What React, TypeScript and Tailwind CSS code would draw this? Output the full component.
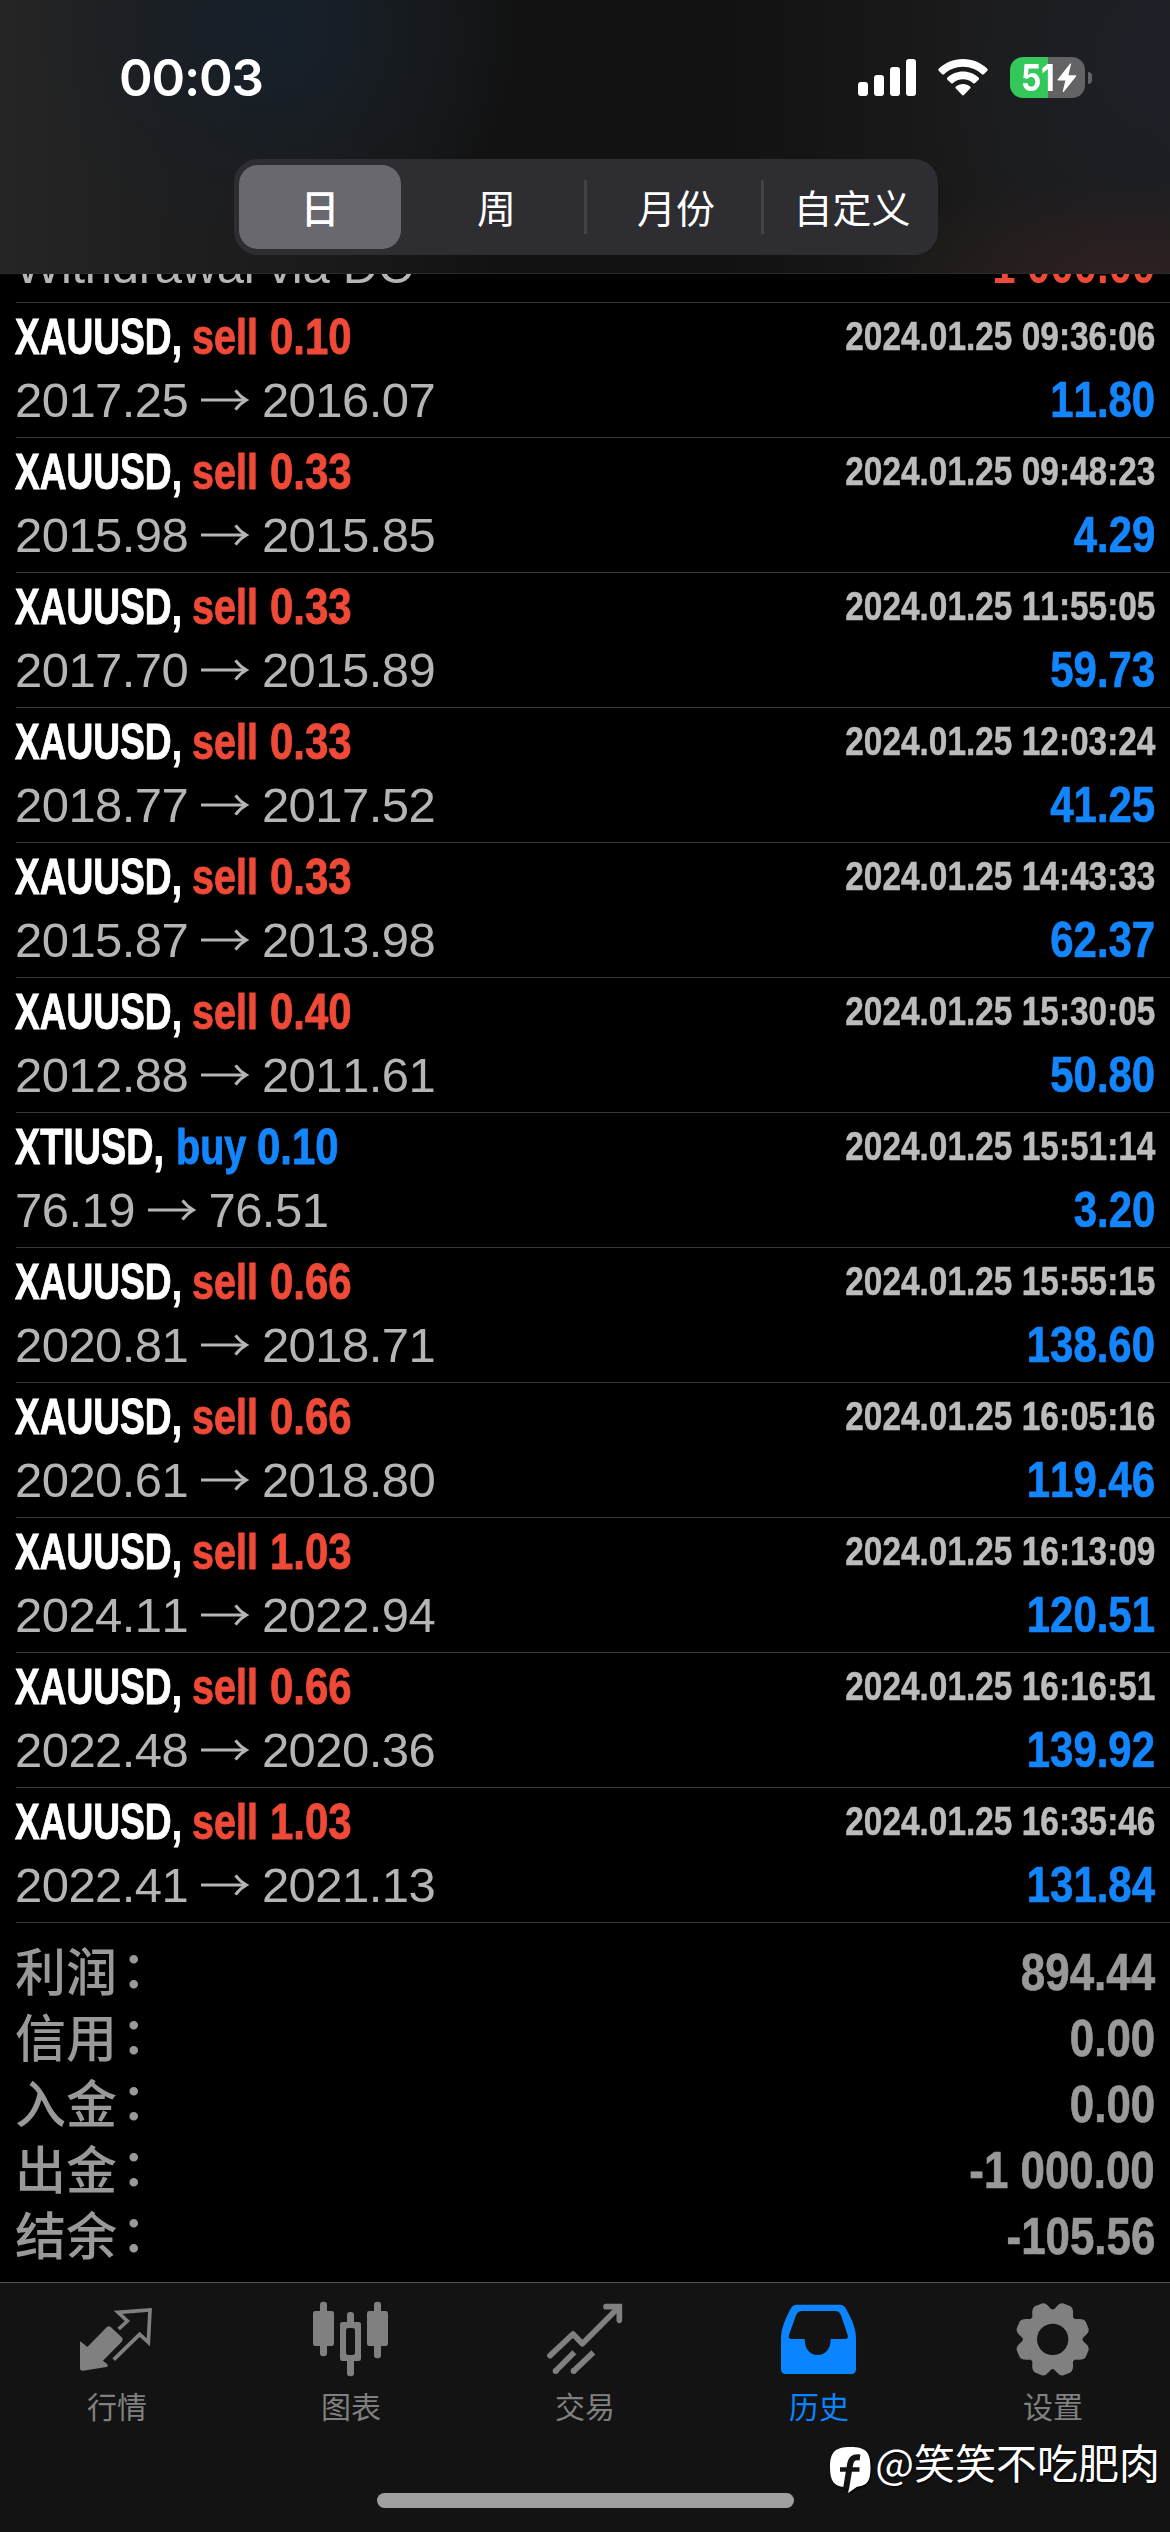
import type { ReactNode } from "react";

type Trade = {
  symbol: "XAUUSD" | "XTIUSD";
  side: "sell" | "buy";
  volume: string;
  open: string;
  close: string;
  time: string;
  profit: string;
};

const sell = (volume: string, open: string, close: string, time: string, profit: string): Trade => ({
  symbol: "XAUUSD", side: "sell", volume, open, close, time, profit,
});

const trades: Trade[] = [
  sell("0.10", "2017.25", "2016.07", "09:36:06", "11.80"),
  sell("0.33", "2015.98", "2015.85", "09:48:23", "4.29"),
  sell("0.33", "2017.70", "2015.89", "11:55:05", "59.73"),
  sell("0.33", "2018.77", "2017.52", "12:03:24", "41.25"),
  sell("0.33", "2015.87", "2013.98", "14:43:33", "62.37"),
  sell("0.40", "2012.88", "2011.61", "15:30:05", "50.80"),
  { symbol: "XTIUSD", side: "buy", volume: "0.10", open: "76.19", close: "76.51", time: "15:51:14", profit: "3.20" },
  sell("0.66", "2020.81", "2018.71", "15:55:15", "138.60"),
  sell("0.66", "2020.61", "2018.80", "16:05:16", "119.46"),
  sell("1.03", "2024.11", "2022.94", "16:13:09", "120.51"),
  sell("0.66", "2022.48", "2020.36", "16:16:51", "139.92"),
  sell("1.03", "2022.41", "2021.13", "16:35:46", "131.84"),
];

const totals = [
  ["利润", "894.44"],
  ["信用", "0.00"],
  ["入金", "0.00"],
  ["出金", "-1 000.00"],
  ["结余", "-105.56"],
];

function Arrow() {
  return (
    <svg viewBox="0 0 48 24" className="mx-[12.8px] h-6 w-12 shrink-0" fill="none" stroke="currentColor" strokeWidth="3">
      <path d="M0 12h45" />
      <path d="M34.500 2.400C37.500 6.500 41 9.600 45.500 12c-4.500 2.400-8 5.500-11 9.600" />
    </svg>
  );
}

function TradeRow({ t }: { t: Trade }) {
  const tone = t.side === "sell" ? "text-[#ef4938]" : "text-[#1486fd]";
  return (
    <div className="ml-4 flex h-[135px] flex-col gap-[3px] border-b border-[#383838] pt-1 pr-[15px]">
      <div className="-ml-px flex h-[60px] justify-between text-[50px] leading-[60px] font-bold whitespace-pre">
        <div className="flex [-webkit-text-stroke:0.9px_currentColor]">
          {t.symbol === "XAUUSD" ? (
            <span className="w-[177px] origin-left scale-x-[0.742] text-white">XAUUSD,</span>
          ) : (
            <span className="w-[160.500px] origin-left scale-x-[0.755] text-white">XTIUSD,</span>
          )}
          {t.side === "sell" ? (
            <span className={`w-[78px] origin-left scale-x-[0.79] ${tone}`}>sell</span>
          ) : (
            <span className={`w-[81px] origin-left scale-x-[0.79] ${tone}`}>buy</span>
          )}
          <span className={`origin-left scale-x-[0.838] ${tone}`}>{t.volume}</span>
        </div>
        <span className="origin-right scale-x-[0.835] text-[40px] leading-[59px] text-[#bcbcbc] [-webkit-text-stroke:0.5px_currentColor]">
          2024.01.25 {t.time}
        </span>
      </div>
      <div className="-ml-px flex h-[60px] items-center justify-between leading-[60px]">
        <div className="flex items-center text-[49px] tracking-[-0.55px] text-[#b5b5b5]">
          {t.open}
          <Arrow />
          {t.close}
        </div>
        <span className="origin-right scale-x-[0.838] text-[50px] font-bold text-[#1486fd] [-webkit-text-stroke:0.7px_currentColor]">{t.profit}</span>
      </div>
    </div>
  );
}

function StatusBar() {
  return (
    <div className="flex h-[159px] items-start justify-between pr-[78px] pl-[119px]">
      <div className="pt-[47px] font-[Inter] text-[51px] leading-[62px] font-semibold tracking-[-1.2px]">00:03</div>
      <div className="flex items-center pt-[57px]">
        <svg viewBox="0 0 58 41" className="h-[41px] w-[58px]" fill="#fff">
          <rect x="0" y="25" width="10" height="14" rx="3" />
          <rect x="16" y="18" width="10" height="21" rx="3" />
          <rect x="32" y="10" width="10" height="29" rx="3" />
          <rect x="48" y="2" width="10" height="37" rx="3" />
        </svg>
        <svg viewBox="0 0 50 41" className="ml-[22px] h-[41px] w-[50px]" fill="#fff">
          <path d="M25 2C15.500 2 7 5.700.7 11.700c-.6.6-.6 1.400 0 2l3.500 3.500c.5.500 1.300.5 1.900 0C11.100 12.500 17.700 9.700 25 9.700s13.900 2.800 18.900 7.500c.6.5 1.400.5 1.900 0l3.500-3.500c.6-.6.6-1.400 0-2C43 5.700 34.500 2 25 2Z" />
          <path d="M25 14.600c-6 0-11.500 2.300-15.600 6-.6.600-.6 1.500 0 2.100l3.500 3.400c.5.600 1.300.6 1.900.1 2.700-2.400 6.300-3.900 10.200-3.900s7.500 1.500 10.200 3.900c.6.500 1.400.5 1.900-.1l3.500-3.400c.6-.6.6-1.500 0-2.100-4.100-3.700-9.600-6-15.600-6Z" />
          <path d="M25 27c-2.700 0-5.200 1-7.100 2.600-.6.600-.6 1.400 0 2l6.200 6.500c.5.500 1.300.5 1.800 0l6.200-6.500c.6-.6.600-1.400 0-2C30.200 28 27.700 27 25 27Z" />
        </svg>
        <div className="ml-[22px] flex h-[41px] w-[75px] items-center rounded-[13px] bg-[linear-gradient(90deg,#34c759_0_38px,#636366_38px)] pl-[11px]">
          <span className="w-9 origin-left scale-x-[0.86] font-[Inter] text-[37px] leading-[41px] font-bold tracking-[-0.5px]">51</span>
          <svg viewBox="0 0 20 30" className="h-[30px] w-5 shrink-0" fill="#fff">
            <path d="M12.800 1 .8 16.300c-.5.700-.2 1.300.6 1.300h7L5.800 28c-.3 1.200.5 1.500 1.200.6l12-15.100c.5-.7.2-1.300-.6-1.300h-7L14 1.600c.3-1.100-.5-1.500-1.200-.6Z" />
          </svg>
        </div>
        <div className="ml-[3px] h-3 w-1 rounded-r-full bg-[#636366]" />
      </div>
    </div>
  );
}

function Header() {
  return (
    <header className="h-[274px] shrink-0 border-b border-[#2b2b2b] bg-[radial-gradient(ellipse_260px_110px_at_1120px_285px,#2f2020_0%,transparent_100%),radial-gradient(ellipse_250px_220px_at_275px_30px,#17202a_0%,transparent_100%),radial-gradient(ellipse_260px_260px_at_1170px_60px,#1d2027_0%,transparent_100%),linear-gradient(90deg,#252525_0px,#202020_130px,#1a1a1a_320px,#121212_500px,#121212_720px,#1b1b1b_1000px,#1d1d1f_1170px)]">
      <StatusBar />
      <div className="ml-[234px] flex h-24 w-[704px] items-center rounded-[24px] bg-[#2e2e32] pl-[5px] font-['Noto_Sans_CJK_SC'] text-[39px] leading-none">
        <div className="flex h-[84px] w-[162px] items-center justify-center rounded-[19px] bg-[#69686e] pb-px font-medium">日</div>
        <div className="flex h-[54px] w-[186px] items-center justify-center border-r-[3px] border-[#424247] pb-px pl-[8px]">周</div>
        <div className="flex h-[54px] w-[177px] items-center justify-center border-r-[3px] border-[#424247] pb-px pl-1">月份</div>
        <div className="flex h-[54px] w-[174px] items-center justify-center pb-px pl-0.5">自定义</div>
      </div>
    </header>
  );
}

function Tab({ label, viewBox, active, children }: { label: string; viewBox: string; active?: boolean; children: ReactNode }) {
  return (
    <div className={`flex flex-1 flex-col items-center pt-[17px] ${active ? "text-[#0a84ff]" : "text-[#808080]"}`}>
      <svg viewBox={viewBox} className="size-[78px]" fill="currentColor" stroke="none">
        {children}
      </svg>
      <span className="mt-3 font-['Noto_Sans_CJK_SC'] text-[30px] leading-[30px]">{label}</span>
    </div>
  );
}

const gearTeeth = [22.5, 67.5, 112.5, 157.5, 202.5, 247.5, 292.5, 337.5];

function TabBar() {
  return (
    <nav className="relative h-[250px] shrink-0 border-t border-[#505050] bg-[#131313]">
      <div className="flex">
        <Tab label="行情" viewBox="234 90 234 234">
          <path d="M240 217q0-4 4-1l18 15 58-59q6-6 13 0l32 30q6 6 0 13l-56 57 12 10q6 7-2 9l-70 11q-9 1-9-8Z" />
          <path d="M356 177l26-24-28-26 96-7-5 97-26-24-78 76" fill="none" stroke="currentColor" strokeWidth="11" />
        </Tab>
        <Tab label="图表" viewBox="936 90 234 234">
          <rect x="939" y="123" width="63" height="105" rx="7" />
          <rect x="960" y="95" width="21" height="164" rx="9" />
          <rect x="1101" y="123" width="63" height="105" rx="7" />
          <rect x="1122" y="95" width="21" height="170" rx="9" />
          <rect x="1041" y="126" width="21" height="42" rx="9" />
          <rect x="1041" y="262" width="21" height="57" rx="9" />
          <path fillRule="evenodd" d="M1027 156h49q7 0 7 7v103q0 7-7 7h-49q-7 0-7-7V163q0-7 7-7Zm18 18q-7 0-7 7v67q0 7 7 7h13q7 0 7-7v-67q0-7-7-7Z" />
        </Tab>
        <Tab label="交易" viewBox="318 90 234 234">
          <g fill="none" stroke="currentColor" strokeWidth="17" strokeLinejoin="round">
            <path d="M330 257l69-65 28 29 104-104" strokeLinecap="round" />
            <path d="M498 110h40v41" strokeLinecap="round" strokeLinejoin="miter" />
            <path d="M346 304l57-57M400 304l60-57" />
          </g>
          <circle cx="347" cy="303" r="9" />
          <circle cx="401" cy="303" r="9" />
        </Tab>
        <Tab label="历史" viewBox="1020 90 234 234" active>
          <path
            fillRule="evenodd"
            d="M1071 104h128q13 0 19 12c18 32 30 60 30 90v92q0 14-14 14h-197q-14 0-14-14v-92c0-30 12-58 29-90q6-12 19-12Zm16 19q-14 0-19 13l-21 59q-3 12 8 12h39c0 30 16 48 39 48s39-18 39-48h43q11 0 8-12l-20-59q-5-13-18-13Z"
          />
        </Tab>
        <Tab label="设置" viewBox="642 90 234 234">
          <path
            fillRule="evenodd"
            d="M758 118a90 90 0 1 0 0 180a90 90 0 1 0 0-180Zm0 43a47 47 0 1 1 0 94a47 47 0 1 1 0-94Z"
          />
          {gearTeeth.map((a) => (
            <path key={a} d="M722 136l8-20q6-19 17-20h22q11 1 17 20l8 20-26 12h-20Z" transform={`rotate(${a} 758 208)`} />
          ))}
        </Tab>
      </div>
      <div className="absolute bottom-6 left-[377px] h-[15px] w-[417px] rounded-full bg-[#9f9f9f]" />
      <div className="absolute top-[152px] right-[10px] flex items-start text-white">
        <svg viewBox="0 0 41 48" className="mt-3 h-12 w-[41px] drop-shadow-[1px_1px_1px_#000]">
          <path d="M20.500 0C5 0 0 5 0 20.500 0 34 4 39 14 40h5l-.8 6L27 39.700C37.500 38.500 40.500 34 40.500 20.500 40.500 5 36 0 20.500 0Z" fill="#fff" />
          <path d="M30 10.500C23 9.500 20.800 12 19.800 19L16 42" fill="none" stroke="#131313" strokeWidth="6" />
          <path d="M10 22.500h19.500" stroke="#131313" strokeWidth="4.5" />
        </svg>
        <span className="ml-1 font-['Noto_Sans_CJK_SC'] text-[41px] leading-[52px] whitespace-nowrap [text-shadow:1px_1px_2px_#000]">@笑笑不吃肥肉</span>
      </div>
    </nav>
  );
}

export default function App() {
  return (
    <div className="flex h-[2532px] w-[1170px] flex-col overflow-hidden bg-black font-['Liberation_Sans','Noto_Sans_CJK_SC',sans-serif] text-white [font-kerning:none]">
      <Header />
      <main className="flex h-[2008px] flex-col">
        <div className="ml-4 flex h-[29px] shrink-0 items-end justify-between overflow-hidden border-b border-[#383838] pr-[15px] pb-[6px] leading-[60px]">
          <span className="-ml-px text-[49px] tracking-[-0.3px] text-[#b5b5b5]">Withdrawal via DC</span>
          <span className="origin-right scale-x-[0.838] text-[50px] font-bold text-[#ef4938]">-1 000.00</span>
        </div>
        {trades.map((t) => (
          <TradeRow key={t.time} t={t} />
        ))}
        <div className="flex flex-col px-[15px] pt-4 text-[#999999]">
          {totals.map(([label, value]) => (
            <div key={label} className="flex h-[66px] justify-between leading-[66px]">
              <span className="flex font-['Noto_Sans_CJK_SC'] text-[51px] leading-[60px] font-medium">
                {label}
                <span className="ml-1 leading-[54px]">：</span>
              </span>
              <span className="origin-right scale-x-[0.844] text-[52px] font-bold [-webkit-text-stroke:0.7px_currentColor]">{value}</span>
            </div>
          ))}
        </div>
      </main>
      <TabBar />
    </div>
  );
}
